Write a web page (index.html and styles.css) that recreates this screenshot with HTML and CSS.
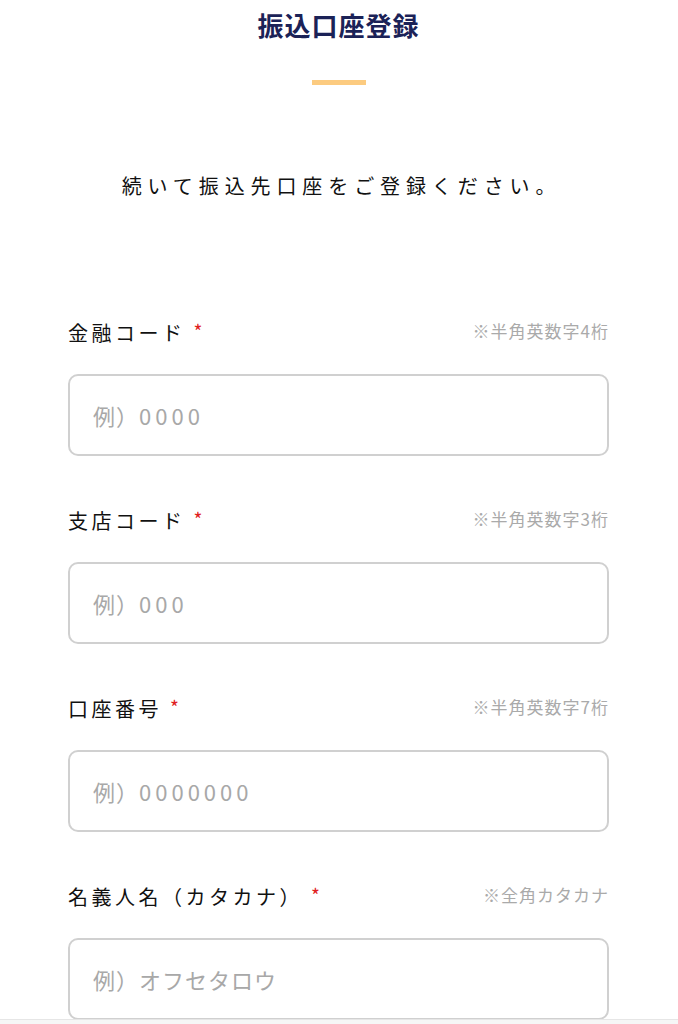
FILE: index.html
```html
<!DOCTYPE html>
<html lang="ja">
<head>
<meta charset="utf-8">
<title>振込口座登録</title>
<link rel="stylesheet" href="styles.css">
</head>
<body>
<main class="page">
  <header class="head">
    <h1 class="title">振込口座登録</h1>
    <div class="accent"></div>
    <p class="lead">続いて振込先口座をご登録ください。</p>
  </header>
  <form class="form">
    <div class="field">
      <div class="label-row">
        <label class="label">金融コード<span class="req">*</span></label>
        <span class="hint">※半角英数字4桁</span>
      </div>
      <div class="input"><span class="ph">例）<span class="num">0000</span></span></div>
    </div>
    <div class="field">
      <div class="label-row">
        <label class="label">支店コード<span class="req">*</span></label>
        <span class="hint">※半角英数字3桁</span>
      </div>
      <div class="input"><span class="ph">例）<span class="num">000</span></span></div>
    </div>
    <div class="field">
      <div class="label-row">
        <label class="label">口座番号<span class="req">*</span></label>
        <span class="hint">※半角英数字7桁</span>
      </div>
      <div class="input"><span class="ph">例）<span class="num">0000000</span></span></div>
    </div>
    <div class="field">
      <div class="label-row">
        <label class="label">名義人名（カタカナ）<span class="req">*</span></label>
        <span class="hint">※全角カタカナ</span>
      </div>
      <div class="input"><span class="ph">例）オフセタロウ</span></div>
    </div>
  </form>
</main>
<div class="footer-bar"></div>
</body>
</html>
```
FILE: styles.css
```css
html, body {
  margin: 0;
  padding: 0;
  background: #ffffff;
}
body {
  font-family: "Noto Sans CJK JP", "Noto Sans", sans-serif;
  color: #111;
  height: 1024px;
  overflow: hidden;
  position: relative;
}
.page {
  padding: 0 69px 0 68px;
}
.head {
  display: flex;
  flex-direction: column;
  align-items: center;
}
.title {
  margin: 6px 0 0;
  font-size: 26px;
  line-height: 38px;
  font-weight: 700;
  color: #1b2257;
  letter-spacing: 1px;
}
.accent {
  width: 54px;
  height: 5px;
  background: #fccb80;
  margin-top: 36px;
}
.lead {
  margin: 86px 0 0 6px;
  font-size: 20px;
  line-height: 30px;
  letter-spacing: 5.9px;
  color: #111;
  font-weight: 400;
}
.form {
  margin-top: 116px;
  display: flex;
  flex-direction: column;
  gap: 49px;
}
.field {
  display: flex;
  flex-direction: column;
}
.label-row {
  display: flex;
  justify-content: space-between;
  align-items: center;
  height: 30px;
}
.label {
  font-size: 20px;
  letter-spacing: 3.5px;
  color: #111;
  display: flex;
  align-items: center;
}
.req {
  color: #e02020;
  font-size: 19px;
  margin-left: 8px;
  line-height: 20px;
  letter-spacing: 0;
  position: relative;
  top: -1px;
}
.hint {
  font-size: 17px;
  color: #aaaaaa;
  letter-spacing: 1px;
  position: relative;
  top: -2px;
}
.input {
  margin-top: 27px;
  height: 78px;
  border: 2px solid #d0d0d0;
  border-radius: 10px;
  display: flex;
  align-items: center;
  padding: 0 23px;
}
.ph {
  font-size: 22px;
  color: #a8a8a8;
  letter-spacing: 1px;
}
.ph .num {
  letter-spacing: 4px;
}
.footer-bar {
  position: absolute;
  left: 0;
  right: 0;
  bottom: 0;
  height: 4px;
  background: #f6f6f6;
  border-top: 1px solid #e6e6e6;
}
```
